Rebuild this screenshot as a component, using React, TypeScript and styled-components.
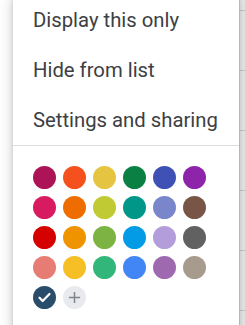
import styled, { createGlobalStyle } from "styled-components";

const GlobalStyle = createGlobalStyle`
  html, body {
    margin: 0;
    padding: 0;
    background: #ffffff;
    overflow: hidden;
  }
  body {
    font-family: Roboto, "Liberation Sans", sans-serif;
  }
`;

const palette: string[] = [
  "#ad1457", "#f4511e", "#e4c441", "#0b8043", "#3f51b5", "#8e24aa",
  "#d81b60", "#ef6c00", "#c0ca33", "#009688", "#7986cb", "#795548",
  "#d50000", "#f09300", "#7cb342", "#039be5", "#b39ddb", "#616161",
  "#e67c73", "#f6bf26", "#33b679", "#4285f4", "#9e69af", "#a79b8e",
];

const Page = styled("div")`
  display: flex;
  width: 245px;
  height: 325px;
  overflow: hidden;
  background: #ffffff;
`;

const Gutter = styled("div")`
  width: 13px;
  flex-shrink: 0;
`;

const Menu = styled("div")`
  width: 226px;
  flex-shrink: 0;
  margin-top: -5px;
  height: 345px;
  background: #ffffff;
  box-shadow: 0 2px 12px rgba(60, 64, 67, 0.3), 0 1px 3px rgba(60, 64, 67, 0.15);
  position: relative;
  z-index: 1;
`;

const MenuItem = styled("div")`
  height: 50px;
  display: flex;
  align-items: center;
  padding-left: 20px;
  font-size: 20.3px;
  color: #3c4043;
  white-space: nowrap;
`;

const Divider = styled("div")`
  height: 1px;
  background: #dadce0;
`;

const Swatches = styled("div")`
  display: grid;
  grid-template-columns: repeat(6, 23px);
  grid-auto-rows: 23px;
  gap: 7px;
  padding: 20px 0 0 20px;
`;

const Swatch = styled("div")<{ $color: string }>`
  width: 23px;
  height: 23px;
  border-radius: 50%;
  background: ${({ $color }) => $color};
  display: flex;
  align-items: center;
  justify-content: center;
`;

const CalendarGrid = styled("div")`
  flex: 1;
  background-color: #ececec;
  background-image: repeating-linear-gradient(
    to bottom,
    transparent 0px,
    transparent 9px,
    #c8c8c8 9px,
    #c8c8c8 10px,
    transparent 10px,
    transparent 60px
  );
  background-size: 100% 60px;
  background-position: 0 1px;
  border-left: 1px solid #d4d4d4;
`;

export default function App() {
  return (
    <>
      <GlobalStyle />
      <Page>
        <Gutter />
        <Menu>
          <MenuItem>Display this only</MenuItem>
          <MenuItem>Hide from list</MenuItem>
          <MenuItem>Settings and sharing</MenuItem>
          <Divider />
          <Swatches>
            {palette.map((c) => (
              <Swatch key={c} $color={c} />
            ))}
            <Swatch $color="#2b4d6c">
              <svg width="15" height="15" viewBox="0 0 24 24">
                <path
                  d="M4 12.5l5 5L20 6.5"
                  fill="none"
                  stroke="#ffffff"
                  strokeWidth="3.6"
                  strokeLinecap="round"
                  strokeLinejoin="round"
                />
              </svg>
            </Swatch>
            <Swatch $color="#e8eaed">
              <svg width="13" height="13" viewBox="0 0 14 14">
                <path d="M7 1v12M1 7h12" stroke="#80868b" strokeWidth="1.6" />
              </svg>
            </Swatch>
          </Swatches>
        </Menu>
        <CalendarGrid />
      </Page>
    </>
  );
}
